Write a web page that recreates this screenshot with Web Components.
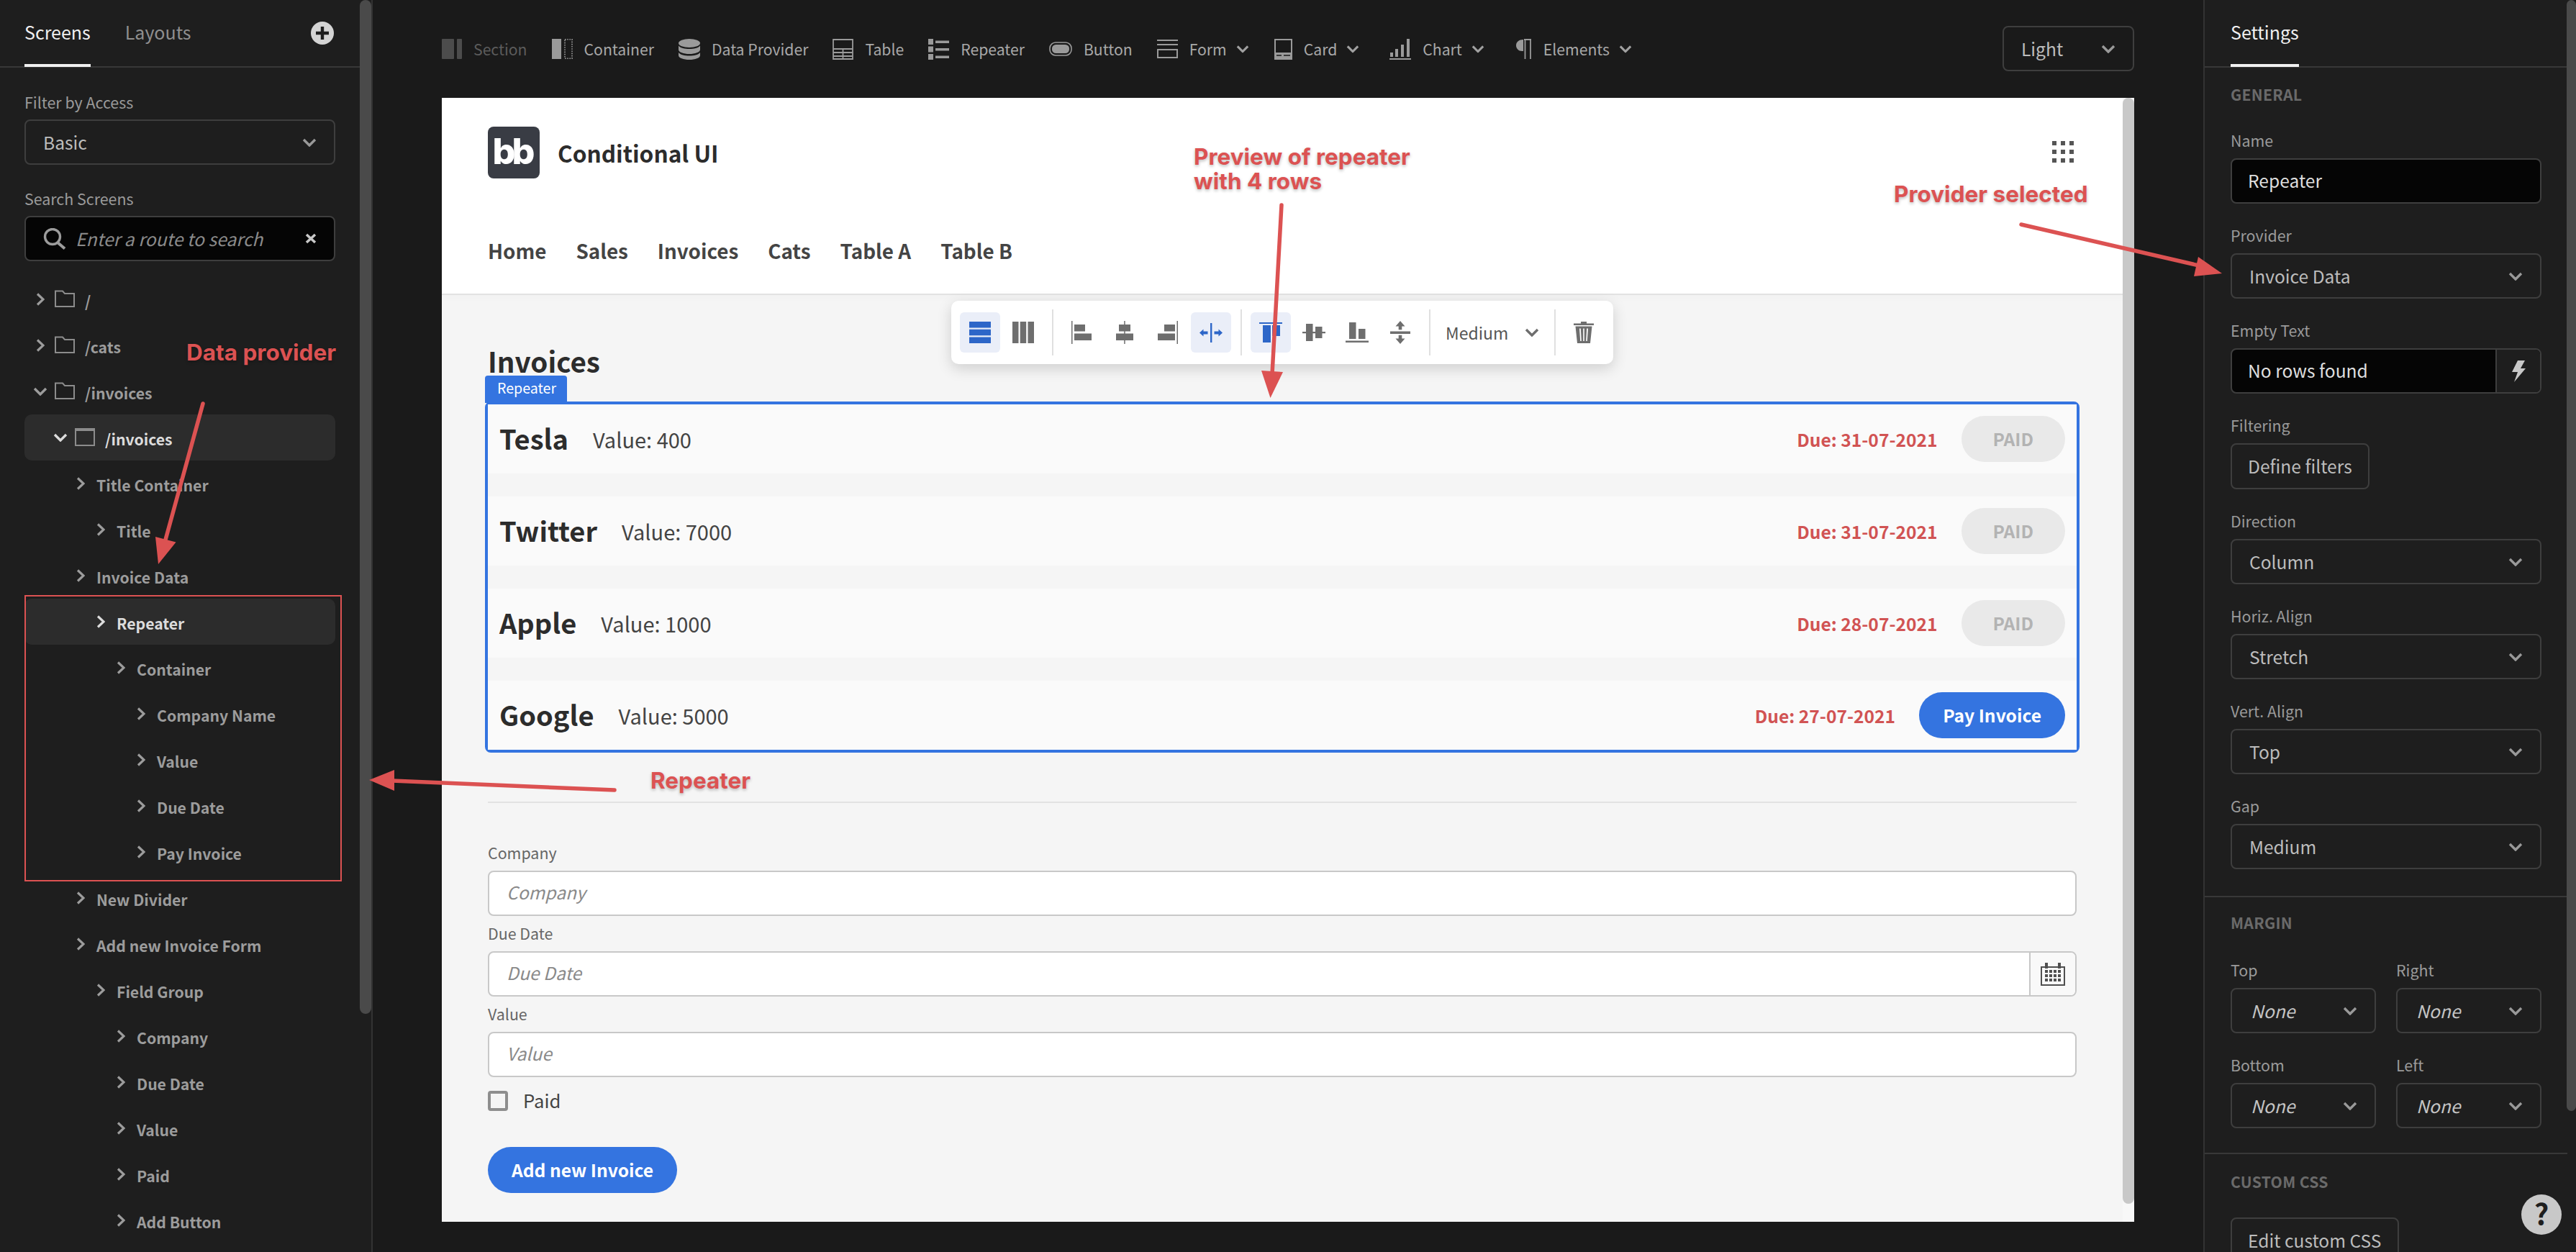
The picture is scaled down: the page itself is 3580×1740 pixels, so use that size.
<!DOCTYPE html>
<html>
<head>
<meta charset="utf-8">
<title>Conditional UI</title>
<style>
  html, body { margin: 0; height: 100%; background: #1a1a1a; overflow: hidden; }
  body { font-family: "Noto Sans CJK SC", "Noto Sans", sans-serif; }
</style>
</head>
<body>
<app-shell>
  <screens-panel slot="left"></screens-panel>
  <design-area slot="center"></design-area>
  <settings-panel slot="right"></settings-panel>
</app-shell>
<note-layer></note-layer>

<script>
const FONT = '"Noto Sans CJK SC", "Noto Sans", sans-serif';

// all icons live here, drawn to the box they have in the screenshot
const ICONS = {
  chevDown: [20, 12, '<path d="M2 2l8 8 8-8" fill="none" stroke="currentColor" stroke-width="3.4"/>'],
  chevRight: [12, 18, '<path d="M2 1.5l8 7.5-8 7.5" fill="none" stroke="currentColor" stroke-width="3.2"/>'],
  folder: [28, 24, '<path d="M1 23V1.5h10l3 3.5h13v18z" fill="none" stroke="currentColor" stroke-width="2"/>'],
  screen: [28, 26, '<path d="M1 3h26v22H1z" fill="none" stroke="currentColor" stroke-width="2"/><path d="M0 1h28v4H0z" fill="currentColor"/>'],
  search: [32, 30, '<circle cx="13" cy="12" r="10.5" fill="none" stroke="currentColor" stroke-width="3.4"/><path d="M20 20l10 8.5" stroke="currentColor" stroke-width="4" fill="none"/>'],
  cross: [16, 15, '<path d="M2 2l12 11M14 2L2 13" stroke="currentColor" stroke-width="3.6" fill="none"/>'],
  plus: [32, 32, '<circle cx="16" cy="16" r="16" fill="currentColor"/><path d="M16 7v18M7 16h18" stroke="#1e1e1e" stroke-width="4.4"/>'],
  bolt: [20, 30, '<path d="M9 0h10l-6 11h7L4 30l5-14H1z" fill="currentColor"/>'],
  section: [28, 28, '<rect width="17" height="28" rx="1" fill="currentColor"/><rect x="21" width="7" height="28" rx="1" fill="currentColor"/>'],
  container: [29, 28, '<rect width="13" height="28" fill="currentColor"/><rect x="18" y=".8" width="10" height="26.4" fill="none" stroke="currentColor" stroke-width="1.6" stroke-dasharray="1.6 1.6"/>'],
  data: [30, 29, '<ellipse cx="15" cy="6" rx="15" ry="6" fill="currentColor"/><path d="M0 9.5c3 3.6 8.500 4.500 15 4.500s12-.9 15-4.500V15c0 3.500-7 6-15 6S0 18.500 0 15z" fill="currentColor"/><path d="M0 19c3 3.600 8.500 4.500 15 4.500s12-.9 15-4.500v4c0 3.500-7 6-15 6s-15-2.500-15-6z" fill="currentColor"/>'],
  table: [29, 29, '<path d="M1 1h27v27H1zM1 14h27M1 19h27M1 24h27M14.500 14v14" fill="none" stroke="currentColor" stroke-width="1.8"/>'],
  repeater: [29, 29, '<path d="M0 0h7v8H0zM0 10.500h7v8H0zM0 21h7v8H0zM10 2.500h19v3.500H10zM10 13h19v3.500H10zM10 23.500h19v3.500H10z" fill="currentColor"/>'],
  button: [32, 20, '<rect x="1" y="1" width="30" height="18" rx="8" fill="none" stroke="currentColor" stroke-width="1.6"/><rect x="4" y="4" width="24" height="12" rx="5.500" fill="currentColor"/>'],
  form: [29, 26, '<path d="M0 1h29M0 7h29" stroke="currentColor" stroke-width="2" fill="none"/><rect x="1" y="14" width="27" height="11" fill="none" stroke="currentColor" stroke-width="2"/>'],
  card: [25, 29, '<rect x="1" y="1" width="23" height="27" fill="none" stroke="currentColor" stroke-width="2"/><path d="M0 19h25v10H0z" fill="currentColor"/><path d="M3 23h7M13 23h9" stroke="#1a1a1a" stroke-width="1.500"/>'],
  chart: [30, 29, '<path d="M0 27h30v2H0zM1 19h4v6H1zM8 14h4v11H8zM16 8h4v17h-4zM24 0h4v25h-4z" fill="currentColor"/>'],
  pilcrow: [22, 28, '<path d="M10 1C4 1 0 4.500 0 9s3.500 8 8 8h2z" fill="currentColor"/><path d="M11 1h10M12.500 1v27M20 1v27" stroke="currentColor" stroke-width="1.800" fill="none"/>'],
  rows: [30, 30, '<path d="M0 0h30v8.500H0zM0 10.700h30v8.500H0zM0 21.500h30V30H0z" fill="currentColor"/>'],
  cols: [30, 30, '<path d="M0 0h8.500v30H0zM10.700 0h8.500v30h-8.500zM21.500 0H30v30h-8.500z" fill="currentColor"/>'],
  alLeft: [28, 32, '<path d="M0 0h1.500v32H0zM4 5h15v9.500H4zM4 17.500h24V27H4z" fill="currentColor"/>'],
  alCenter: [24, 32, '<path d="M11.200 0h1.500v32h-1.500zM4 5h16v9.500H4zM0 17.500h24V27H0z" fill="currentColor"/>'],
  alRight: [28, 32, '<path d="M26.500 0H28v32h-1.500zM9 5h15v9.500H9zM0 17.500h24V27H0z" fill="currentColor"/>'],
  alStretch: [32, 27, '<path d="M15 0h2.400v27H15zM0 13.500l5.500-5v3h6v4h-6v3zM32 13.500l-5.500-5v3h-6v4h6v3z" fill="currentColor"/>'],
  vaTop: [32, 28, '<path d="M0 0h32v2H0zM5 4h11v24H5zM18 4h11v15H18z" fill="currentColor"/>'],
  vaMid: [32, 24, '<path d="M0 11h32v2.200H0zM5 0h9.500v24H5zM18 4h9.500v16H18z" fill="currentColor"/>'],
  vaBot: [32, 28, '<path d="M5 0h9.500v23H5zM18 9h9.500v14H18zM0 25.500h32V28H0z" fill="currentColor"/>'],
  vaSpace: [28, 32, '<path d="M0 14.500h28v3.500H0zM14 0l6.500 7.500h-4.200v4.800h-4.600V7.500H7.500zM14 32l6.500-7.500h-4.200v-4.800h-4.600v4.800H7.500z" fill="currentColor"/>'],
  trash: [28, 30, '<path d="M10 2.500V0h8v2.500h10V5H0V2.500zM2.500 6.500h23L23 30H5zM8 9.500l1.200 17.500h1.600L9.800 9.500zM13.200 9.500V27h1.600V9.500zM18.200 9.500L17.200 27h1.600L20 9.500z" fill="currentColor" fill-rule="evenodd"/>'],
  dots: [30, 30, '<path d="M0 0h6v6H0zM12 0h6v6h-6zM24 0h6v6h-6zM0 12h6v6H0zM12 12h6v6h-6zM24 12h6v6h-6zM0 24h6v6H0zM12 24h6v6h-6zM24 24h6v6h-6z" fill="currentColor"/>'],
  calendar: [34, 32, '<path d="M1 6h32v25H1z" fill="none" stroke="currentColor" stroke-width="2"/><path d="M6 0h4v8H6zM24 0h4v8h-4zM6 10h4v4H6zM12 10h4v4h-4zM18 10h4v4h-4zM24 10h4v4h-4zM6 16h4v4H6zM12 16h4v4h-4zM18 16h4v4h-4zM24 16h4v4h-4zM6 22h4v4H6zM12 22h4v4h-4zM18 22h4v4h-4zM24 22h4v4h-4z" fill="currentColor"/>'],
};

class BbIcon extends HTMLElement {
  connectedCallback() {
    const [w, h, body] = ICONS[this.getAttribute('name')];
    this.attachShadow({ mode: 'open' });
    this.shadowRoot.innerHTML = `
      <style>:host { display: inline-flex; flex: none; line-height: 0; } svg { display: block; }</style>
      <svg width="${w}" height="${h}" viewBox="0 0 ${w} ${h}">${body}</svg>`;
  }
}
customElements.define('bb-icon', BbIcon);

class AppShell extends HTMLElement {
  constructor() {
    super();
    this.attachShadow({ mode: 'open' });
    this.shadowRoot.innerHTML = `
      <style>
        :host { display: flex; width: 3580px; height: 1740px; background: #1a1a1a; font-family: ${FONT}; overflow: hidden; }
        ::slotted([slot=left]) { flex: none; }
        ::slotted([slot=center]) { flex: 1; min-width: 0; }
        ::slotted([slot=right]) { flex: none; }
      </style>
      <slot name="left"></slot><slot name="center"></slot><slot name="right"></slot>`;
  }
}
customElements.define('app-shell', AppShell);

// dark dropdown box, used on both side panels and in the top bar
class BbSelect extends HTMLElement {
  constructor() {
    super();
    this.attachShadow({ mode: 'open' });
    this.shadowRoot.innerHTML = `
      <style>
        :host { display: flex; box-sizing: border-box; height: 63px; align-items: center; justify-content: space-between;
          border: 2px solid #3e3e3e; border-radius: 8px; padding: 0 24px 0 24px; font-size: 24.6px; line-height: 36px; color: #bcbcbc; }
        :host([italic]) { font-style: italic; padding-left: 26px; color: #c4c4c4; }
        bb-icon { color: #999; margin-top: 1px; }
        span { margin-top: -2px; }
      </style>
      <span><slot></slot></span><bb-icon name="chevDown"></bb-icon>`;
  }
}
customElements.define('bb-select', BbSelect);

class TextBox extends HTMLElement {
  constructor() {
    super();
    this.attachShadow({ mode: 'open' });
    this.shadowRoot.innerHTML = `
      <style>
        :host { display: flex; box-sizing: border-box; height: 63px; align-items: center; background: #050505;
          border: 2px solid #3e3e3e; border-radius: 8px; padding-left: 22px; font-size: 24.6px; line-height: 36px; color: #dedede; }
        span { flex: 1; margin-top: -4px; }
      </style>
      <span><slot></slot></span><slot name="end"></slot>`;
  }
}
customElements.define('text-box', TextBox);

class TreeRow extends HTMLElement {
  connectedCallback() {
    const level = +this.getAttribute('level');
    const icon = this.getAttribute('icon');
    const open = this.hasAttribute('open');
    this.attachShadow({ mode: 'open' });
    this.shadowRoot.innerHTML = `
      <style>
        :host { display: flex; height: 64px; align-items: center; border-radius: 10px; font-size: 21.2px; font-weight: 600; color: #9c9c9c; line-height: 30px; }
        :host([selected]) { background: #2c2c2c; }
        :host([selected][bright]) { color: #dcdcdc; }
        .arrow { width: 20px; margin-left: ${12 + level * 28}px; display: flex; justify-content: center; }
        .icon { margin-left: 10px; margin-top: -2px; color: #8c8c8c; }
        .text { margin-left: ${icon ? 14 : 12}px; margin-top: 4px; }
      </style>
      <span class="arrow"><bb-icon name="${open ? 'chevDown' : 'chevRight'}"></bb-icon></span>
      ${icon ? `<bb-icon class="icon" name="${icon}"></bb-icon>` : ''}
      <span class="text"><slot></slot></span>`;
  }
}
customElements.define('tree-row', TreeRow);

class PanelTabs extends HTMLElement {
  constructor() {
    super();
    this.attachShadow({ mode: 'open' });
    this.shadowRoot.innerHTML = `
      <style>
        :host { display: flex; box-sizing: border-box; height: 94px; border-bottom: 2px solid #383838; font-size: 25px; line-height: 36px; color: #8f8f8f; gap: 48px; align-items: stretch; padding-left: var(--tabs-left, 34px); position: relative; }
      </style>
      <slot></slot>`;
  }
}
customElements.define('panel-tabs', PanelTabs);

class PanelTab extends HTMLElement {
  constructor() {
    super();
    this.attachShadow({ mode: 'open' });
    this.shadowRoot.innerHTML = `
      <style>
        :host { display: flex; box-sizing: border-box; align-items: center; padding-bottom: 2px; border-bottom: 4px solid transparent; margin-bottom: -1px; }
        :host([active]) { color: #f0f0f0; border-bottom-color: #f0f0f0; }
      </style>
      <slot></slot>`;
  }
}
customElements.define('panel-tab', PanelTab);

class ScrollThumb extends HTMLElement {
  constructor() {
    super();
    this.attachShadow({ mode: 'open' });
    this.shadowRoot.innerHTML = `
      <style>
        :host { position: absolute; top: 0; right: var(--right, 0); width: var(--w, 16px); height: var(--h); background: var(--c, #4a4a4a); border-radius: 8px; }
      </style>`;
  }
}
customElements.define('scroll-thumb', ScrollThumb);

class ScreensPanel extends HTMLElement {
  constructor() {
    super();
    this.attachShadow({ mode: 'open' });
    const rows = [
      [0, 'folder', '/'], [0, 'folder', '/cats'], [0, 'folder', '/invoices', 'open'],
      [1, 'screen', '/invoices', 'open selected bright'],
      [2, '', 'Title Container'], [3, '', 'Title'], [2, '', 'Invoice Data'],
      [3, '', 'Repeater', 'selected bright'], [4, '', 'Container'],
      [5, '', 'Company Name'], [5, '', 'Value'], [5, '', 'Due Date'], [5, '', 'Pay Invoice'],
      [2, '', 'New Divider'], [2, '', 'Add new Invoice Form'], [3, '', 'Field Group'],
      [4, '', 'Company'], [4, '', 'Due Date'], [4, '', 'Value'], [4, '', 'Paid'], [4, '', 'Add Button'],
    ].map(([l, ic, t, flags]) => `<tree-row level="${l}" ${ic ? `icon="${ic}"` : ''} ${flags || ''}>${t}</tree-row>`).join('');
    this.shadowRoot.innerHTML = `
      <style>
        :host { display: block; box-sizing: border-box; width: 518px; height: 1740px; background: #1e1e1e; border-right: 2px solid #333; position: relative; overflow: hidden; --h: 1409px; }
        panel-tabs { width: 500px; }
        bb-icon.add { position: absolute; left: 432px; top: 30px; color: #d4d4d4; }
        .body { width: 432px; margin-left: 34px; }
        label { display: block; font-size: 21.4px; line-height: 24px; color: #9a9a9a; margin-bottom: 12px; }
        .first { margin-top: 36px; }
        .second { margin-top: 35px; }
        .tree { margin-top: 21px; }
      </style>
      <panel-tabs><panel-tab active>Screens</panel-tab><panel-tab>Layouts</panel-tab></panel-tabs>
      <bb-icon class="add" name="plus"></bb-icon>
      <div class="body">
        <label class="first">Filter by Access</label>
        <bb-select>Basic</bb-select>
        <label class="second">Search Screens</label>
        <search-box></search-box>
        <div class="tree">${rows}</div>
      </div>
      <scroll-thumb></scroll-thumb>`;
  }
}
customElements.define('screens-panel', ScreensPanel);

class SearchBox extends HTMLElement {
  constructor() {
    super();
    this.attachShadow({ mode: 'open' });
    this.shadowRoot.innerHTML = `
      <style>
        :host { display: flex; box-sizing: border-box; height: 63px; align-items: center; background: #050505; border: 2px solid #3e3e3e; border-radius: 8px; padding: 0 24px 0 24px; font-size: 24.8px; line-height: 36px; font-style: italic; color: #8a8a8a; }
        span { flex: 1; margin-left: 13px; margin-top: -2px; white-space: nowrap; }
        .s { color: #9c9c9c; } .x { color: #c8c8c8; }
      </style>
      <bb-icon class="s" name="search"></bb-icon><span>Enter a route to search</span><bb-icon class="x" name="cross"></bb-icon>`;
  }
}
customElements.define('search-box', SearchBox);

class TopItem extends HTMLElement {
  connectedCallback() {
    const menu = this.hasAttribute('menu');
    this.attachShadow({ mode: 'open' });
    this.shadowRoot.innerHTML = `
      <style>
        :host { display: flex; align-items: center; gap: 16px; font-size: 21.2px; line-height: 30px; color: #a8a8a8; }
        :host([off]) { color: #5c5c5c; }
        bb-icon { color: #9a9a9a; }
        :host([off]) bb-icon { color: #4c4c4c; }
        .c { margin-left: -4px; color: #a0a0a0; transform: scale(.9); }
      </style>
      <bb-icon name="${this.getAttribute('icon')}"></bb-icon><span><slot></slot></span>
      ${menu ? '<bb-icon class="c" name="chevDown"></bb-icon>' : ''}`;
  }
}
customElements.define('top-item', TopItem);

class DesignArea extends HTMLElement {
  constructor() {
    super();
    this.attachShadow({ mode: 'open' });
    this.shadowRoot.innerHTML = `
      <style>
        :host { display: flex; flex-direction: column; padding: 0 96px; box-sizing: border-box; height: 1740px; }
        .top { display: flex; align-items: center; height: 136px; gap: 34px; flex: none; }
        .top bb-select { margin-left: auto; width: 183px; margin-top: -1px; }
        .wide1 { margin-right: 7px; } .wide2 { margin-right: 9px; }
      </style>
      <div class="top">
        <top-item icon="section" off>Section</top-item>
        <top-item icon="container">Container</top-item>
        <top-item icon="data">Data Provider</top-item>
        <top-item icon="table">Table</top-item>
        <top-item icon="repeater">Repeater</top-item>
        <top-item icon="button">Button</top-item>
        <top-item icon="form" menu>Form</top-item>
        <top-item class="wide1" icon="card" menu>Card</top-item>
        <top-item class="wide2" icon="chart" menu>Chart</top-item>
        <top-item icon="pilcrow" menu>Elements</top-item>
        <bb-select>Light</bb-select>
      </div>
      <preview-canvas></preview-canvas>`;
  }
}
customElements.define('design-area', DesignArea);

class PreviewCanvas extends HTMLElement {
  constructor() {
    super();
    this.attachShadow({ mode: 'open' });
    this.shadowRoot.innerHTML = `
      <style>
        :host { display: block; position: relative; height: 1562px; background: #f5f5f5; overflow: hidden; --right: 0; --h: 1537px; --c: #c8c8c8; }
        .scrollbg { position: absolute; top: 0; bottom: 0; right: 0; width: 16px; background: #f8f8f8; }
        .content { padding: 0 80px 0 64px; }
        h1 { margin: 0; padding-top: 69px; height: 79px; font-size: 38.6px; line-height: 44px; font-weight: 600; color: #2c2c2c; }
        .divider { height: 2px; background: #e2e2e2; margin-top: 68px; }
        .form { padding-top: 58px; }
        check-row { margin-top: 19px; }
        .add { margin-top: 50px; }
      </style>
      <site-header></site-header>
      <div class="content">
        <h1>Invoices</h1>
        <repeater-box>
          <invoice-row name="Tesla" value="400" due="31-07-2021" paid></invoice-row>
          <invoice-row name="Twitter" value="7000" due="31-07-2021" paid></invoice-row>
          <invoice-row name="Apple" value="1000" due="28-07-2021" paid></invoice-row>
          <invoice-row name="Google" value="5000" due="27-07-2021"></invoice-row>
        </repeater-box>
        <div class="divider"></div>
        <div class="form">
          <form-field label="Company"></form-field>
          <form-field label="Due Date" date></form-field>
          <form-field label="Value"></form-field>
          <check-row>Paid</check-row>
          <pill-button class="add">Add new Invoice</pill-button>
        </div>
      </div>
      <float-bar></float-bar>
      <div class="scrollbg"></div>
      <scroll-thumb></scroll-thumb>`;
  }
}
customElements.define('preview-canvas', PreviewCanvas);

class SiteHeader extends HTMLElement {
  constructor() {
    super();
    this.attachShadow({ mode: 'open' });
    this.shadowRoot.innerHTML = `
      <style>
        :host { display: block; box-sizing: border-box; height: 274px; background: #fff; border-bottom: 2px solid #e2e2e2; padding: 40px 0 0 64px; box-shadow: 0 4px 12px rgba(0,0,0,.02); }
        .brand { display: flex; align-items: center; height: 72px; position: relative; }
        .logo { width: 72px; height: 72px; box-sizing: border-box; background: #393c44; border-radius: 8px; color: #fff; font-family: Inter, sans-serif; font-weight: 800; font-size: 50px; line-height: 68px; letter-spacing: -5px; text-align: center; padding-right: 5px; }
        .name { margin-left: 25px; font-size: 31.6px; line-height: 44px; font-weight: 600; color: #2c2c2c; }
        bb-icon { position: absolute; left: 2174px; top: 20px; color: #555; }
        nav { display: flex; gap: 41px; margin-top: 80px; font-size: 27.8px; line-height: 40px; font-weight: 600; color: #444; }
      </style>
      <div class="brand"><div class="logo">bb</div><div class="name">Conditional UI</div><bb-icon name="dots"></bb-icon></div>
      <nav><span>Home</span><span>Sales</span><span>Invoices</span><span>Cats</span><span>Table A</span><span>Table B</span></nav>`;
  }
}
customElements.define('site-header', SiteHeader);

class RepeaterBox extends HTMLElement {
  constructor() {
    super();
    this.attachShadow({ mode: 'open' });
    this.shadowRoot.innerHTML = `
      <style>
        :host { display: flex; flex-direction: column; gap: 32px; position: relative; margin: 0 -4px; border: 4px solid #3474e0; border-radius: 8px; }
        .tag { position: absolute; left: -4px; top: -40px; width: 114px; height: 38px; box-sizing: border-box; background: #3474e0; color: #fff; font-size: 19.6px; line-height: 34px; text-align: center; padding-left: 2px; border-radius: 4px 4px 0 0; }
      </style>
      <div class="tag">Repeater</div><slot></slot>`;
  }
}
customElements.define('repeater-box', RepeaterBox);

class PillButton extends HTMLElement {
  constructor() {
    super();
    this.attachShadow({ mode: 'open' });
    this.shadowRoot.innerHTML = `
      <style>
        :host { display: inline-flex; box-sizing: border-box; height: 64px; padding: 0 33px; align-items: center; border-radius: 32px; background: #3474e0; color: #fff; font-size: 24.6px; line-height: 34px; font-weight: 700; white-space: nowrap; }
        :host([disabled]) { background: #e9e9e9; color: #b3b3b3; padding: 0 44px; }
        span { margin-top: -3px; }
      </style>
      <span><slot></slot></span>`;
  }
}
customElements.define('pill-button', PillButton);

class InvoiceRow extends HTMLElement {
  connectedCallback() {
    const paid = this.hasAttribute('paid');
    this.attachShadow({ mode: 'open' });
    this.shadowRoot.innerHTML = `
      <style>
        :host { display: flex; height: 96px; align-items: center; background: #fafafa; padding: 0 16px; }
        .name { font-size: 38px; line-height: 48px; font-weight: 600; color: #2c2c2c; margin-top: -2px; }
        .value { margin-left: 34px; font-size: 29px; line-height: 40px; color: #444; }
        .due { margin-left: auto; margin-right: 33px; font-size: 24.6px; line-height: 34px; font-weight: 600; color: #d15353; }
      </style>
      <span class="name">${this.getAttribute('name')}</span>
      <span class="value">Value: ${this.getAttribute('value')}</span>
      <span class="due">Due: ${this.getAttribute('due')}</span>
      <pill-button ${paid ? 'disabled' : ''}>${paid ? 'PAID' : 'Pay Invoice'}</pill-button>`;
  }
}
customElements.define('invoice-row', InvoiceRow);

class FormField extends HTMLElement {
  connectedCallback() {
    const label = this.getAttribute('label');
    const date = this.hasAttribute('date');
    this.attachShadow({ mode: 'open' });
    this.shadowRoot.innerHTML = `
      <style>
        :host { display: block; margin-bottom: 13px; }
        label { display: block; font-size: 21.4px; line-height: 22px; height: 24px; color: #666; margin-bottom: 12px; }
        .box { display: flex; box-sizing: border-box; height: 63px; background: #fff; border: 2px solid #c8c8c8; border-radius: 8px; overflow: hidden; }
        .ph { flex: 1; padding-left: 24px; font-size: 24.6px; line-height: 55px; font-style: italic; color: #8a8a8a; }
        .cal { width: 62px; display: flex; align-items: center; justify-content: center; border-left: 2px solid #c8c8c8; background: #f9f9f9; color: #505050; }
      </style>
      <label>${label}</label>
      <div class="box"><div class="ph">${label}</div>
        ${date ? '<div class="cal"><bb-icon name="calendar"></bb-icon></div>' : ''}</div>`;
  }
}
customElements.define('form-field', FormField);

class CheckRow extends HTMLElement {
  constructor() {
    super();
    this.attachShadow({ mode: 'open' });
    this.shadowRoot.innerHTML = `
      <style>
        :host { display: flex; height: 28px; align-items: center; gap: 21px; font-size: 25.6px; line-height: 28px; color: #444; }
        i { display: block; width: 28px; height: 28px; box-sizing: border-box; border: 4px solid #8e8e8e; border-radius: 4px; background: #f5f5f5; }
        span { margin-top: -3px; }
      </style>
      <i></i><span><slot></slot></span>`;
  }
}
customElements.define('check-row', CheckRow);

class FloatBar extends HTMLElement {
  constructor() {
    super();
    this.attachShadow({ mode: 'open' });
    this.shadowRoot.innerHTML = `
      <style>
        :host { position: absolute; left: 708px; top: 282px; width: 920px; height: 88px; box-sizing: border-box; display: flex; align-items: center; padding-left: 12px; background: #fff; border-radius: 10px; box-shadow: 0 6px 20px rgba(0,0,0,.16); color: #6e6e6e; }
        .b { width: 56px; height: 56px; margin-right: 4px; display: flex; align-items: center; justify-content: center; border-radius: 6px; }
        .b.on { background: #eaeef8; color: #2d66c8; }
        .sep { width: 2px; height: 64px; background: #e0e0e0; flex: none; }
        .s1 { margin: 0 11px 0 8px; } .s2 { margin: 0 12px 0 9px; } .s3 { margin: 0 21px 0 8px; } .s4 { margin: 0 25px 0 21px; }
        .med { font-size: 23px; line-height: 30px; color: #555; width: 94px; }
        .m { margin-left: 16px; color: #6e6e6e; }
      </style>
      <div class="b on"><bb-icon name="rows"></bb-icon></div>
      <div class="b"><bb-icon name="cols"></bb-icon></div>
      <div class="sep s1"></div>
      <div class="b"><bb-icon name="alLeft"></bb-icon></div>
      <div class="b"><bb-icon name="alCenter"></bb-icon></div>
      <div class="b"><bb-icon name="alRight"></bb-icon></div>
      <div class="b on"><bb-icon name="alStretch"></bb-icon></div>
      <div class="sep s2"></div>
      <div class="b on"><bb-icon name="vaTop"></bb-icon></div>
      <div class="b"><bb-icon name="vaMid"></bb-icon></div>
      <div class="b"><bb-icon name="vaBot"></bb-icon></div>
      <div class="b"><bb-icon name="vaSpace"></bb-icon></div>
      <div class="sep s3"></div>
      <div class="med">Medium</div><bb-icon class="m" name="chevDown"></bb-icon>
      <div class="sep s4"></div>
      <bb-icon name="trash"></bb-icon>`;
  }
}
customElements.define('float-bar', FloatBar);

class PropField extends HTMLElement {
  connectedCallback() {
    this.attachShadow({ mode: 'open' });
    this.shadowRoot.innerHTML = `
      <style>
        :host { display: block; margin-bottom: 33px; }
        label { display: block; font-size: 21.4px; line-height: 22px; height: 24px; color: #9a9a9a; margin-bottom: 12px; }
      </style>
      <label>${this.getAttribute('label')}</label><slot></slot>`;
  }
}
customElements.define('prop-field', PropField);

class PlainButton extends HTMLElement {
  constructor() {
    super();
    this.attachShadow({ mode: 'open' });
    this.shadowRoot.innerHTML = `
      <style>
        :host { display: inline-flex; box-sizing: border-box; height: 64px; align-items: center; padding: 0 22px; border: 2px solid #3e3e3e; border-radius: 8px; font-size: 24.6px; line-height: 36px; color: #bcbcbc; white-space: nowrap; }
        span { margin-top: -2px; }
      </style>
      <span><slot></slot></span>`;
  }
}
customElements.define('plain-button', PlainButton);

class PanelSection extends HTMLElement {
  connectedCallback() {
    this.attachShadow({ mode: 'open' });
    this.shadowRoot.innerHTML = `
      <style>
        :host { display: block; box-sizing: border-box; padding: var(--top, 24px) 36px 0 36px; border-top: 2px solid #383838; width: 504px; }
        :host([plain]) { border-top: none; }
        h3 { margin: 0 0 var(--after, 40px); font-size: 21.2px; line-height: 22px; height: 24px; font-weight: 700; color: #6a6a6a; letter-spacing: .3px; }
      </style>
      <h3>${this.getAttribute('title')}</h3><slot></slot>`;
  }
}
customElements.define('panel-section', PanelSection);

class SettingsPanel extends HTMLElement {
  constructor() {
    super();
    this.attachShadow({ mode: 'open' });
    this.shadowRoot.innerHTML = `
      <style>
        :host { display: block; box-sizing: border-box; width: 518px; height: 1740px; background: #1e1e1e; border-left: 2px solid #333; position: relative; overflow: hidden; --h: 1544px; --w: 13px; }
        panel-tabs { width: 503px; --tabs-left: 36px; }
        .pair { display: grid; grid-template-columns: 202px 202px; column-gap: 28px; }
        .general { --top: 26px; padding-bottom: 4px; }
        .margin { --after: 42px; padding-bottom: 1px; }
        .css { --top: 27px; --after: 37px; }
        .bolt { width: 62px; height: 59px; box-sizing: border-box; border-left: 2px solid #3e3e3e; background: #1e1e1e; display: flex; align-items: center; justify-content: center; color: #c8c8c8; border-radius: 0 6px 6px 0; }
        .help { position: absolute; left: 440px; top: 1660px; width: 56px; height: 56px; border-radius: 50%; background: #c8c8c8; color: #1e1e1e; font-size: 40px; line-height: 50px; font-weight: 700; text-align: center; }
      </style>
      <panel-tabs><panel-tab active>Settings</panel-tab></panel-tabs>
      <panel-section class="general" plain title="GENERAL">
        <prop-field label="Name"><text-box>Repeater</text-box></prop-field>
        <prop-field label="Provider"><bb-select>Invoice Data</bb-select></prop-field>
        <prop-field label="Empty Text"><text-box>No rows found<div slot="end" class="bolt"><bb-icon name="bolt"></bb-icon></div></text-box></prop-field>
        <prop-field label="Filtering"><plain-button>Define filters</plain-button></prop-field>
        <prop-field label="Direction"><bb-select>Column</bb-select></prop-field>
        <prop-field label="Horiz. Align"><bb-select>Stretch</bb-select></prop-field>
        <prop-field label="Vert. Align"><bb-select>Top</bb-select></prop-field>
        <prop-field label="Gap"><bb-select>Medium</bb-select></prop-field>
      </panel-section>
      <panel-section class="margin" title="MARGIN">
        <div class="pair">
          <prop-field label="Top"><bb-select italic>None</bb-select></prop-field>
          <prop-field label="Right"><bb-select italic>None</bb-select></prop-field>
          <prop-field label="Bottom"><bb-select italic>None</bb-select></prop-field>
          <prop-field label="Left"><bb-select italic>None</bb-select></prop-field>
        </div>
      </panel-section>
      <panel-section class="css" title="CUSTOM CSS">
        <plain-button>Edit custom CSS</plain-button>
      </panel-section>
      <scroll-thumb></scroll-thumb>
      <div class="help">?</div>`;
  }
}
customElements.define('settings-panel', SettingsPanel);

// red annotations someone drew on top of the screenshot
class NoteLayer extends HTMLElement {
  constructor() {
    super();
    this.attachShadow({ mode: 'open' });
    const arrow = (x1, y1, x2, y2, a, b) => `
      <line x1="${x1}" y1="${y1}" x2="${x2}" y2="${y2}" stroke="#dc5252" stroke-width="5.500" stroke-linecap="round"/>
      <polygon points="${a} ${b}" fill="#dc5252"/>`;
    this.shadowRoot.innerHTML = `
      <style>
        :host { position: absolute; left: 0; top: 0; width: 3580px; height: 1740px; pointer-events: none; font-family: Inter, sans-serif; }
        svg { position: absolute; left: 0; top: 0; }
        .t { position: absolute; font-size: 31.5px; line-height: 36px; font-weight: 700; color: #dc5252; text-shadow: 0 2px 4px rgba(0,0,0,.28); white-space: nowrap; }
        .box { position: absolute; left: 34px; top: 827px; width: 441px; height: 398px; box-sizing: border-box; border: 2px solid #dc5252; }
      </style>
      <div class="box"></div>
      <svg width="3580" height="1740">
        ${arrow(282, 561, 230, 750, '216,746', '244.500,753.600 220,784')}
        ${arrow(1781, 285, 1768, 520, '1753,515', '1783,517 1765.500,553')}
        ${arrow(2809, 312, 3060, 370, '3055,357', '3049,384 3088,380')}
        ${arrow(854, 1098, 545, 1085, '548,1070', '548,1099 513,1084')}
      </svg>
      <div class="t" style="left:259px;top:472px">Data provider</div>
      <div class="t" style="left:1659px;top:201px;line-height:34px">Preview of repeater<br>with 4 rows</div>
      <div class="t" style="left:2632px;top:252px">Provider selected</div>
      <div class="t" style="left:904px;top:1067px">Repeater</div>`;
  }
}
customElements.define('note-layer', NoteLayer);
</script>
</body>
</html>
